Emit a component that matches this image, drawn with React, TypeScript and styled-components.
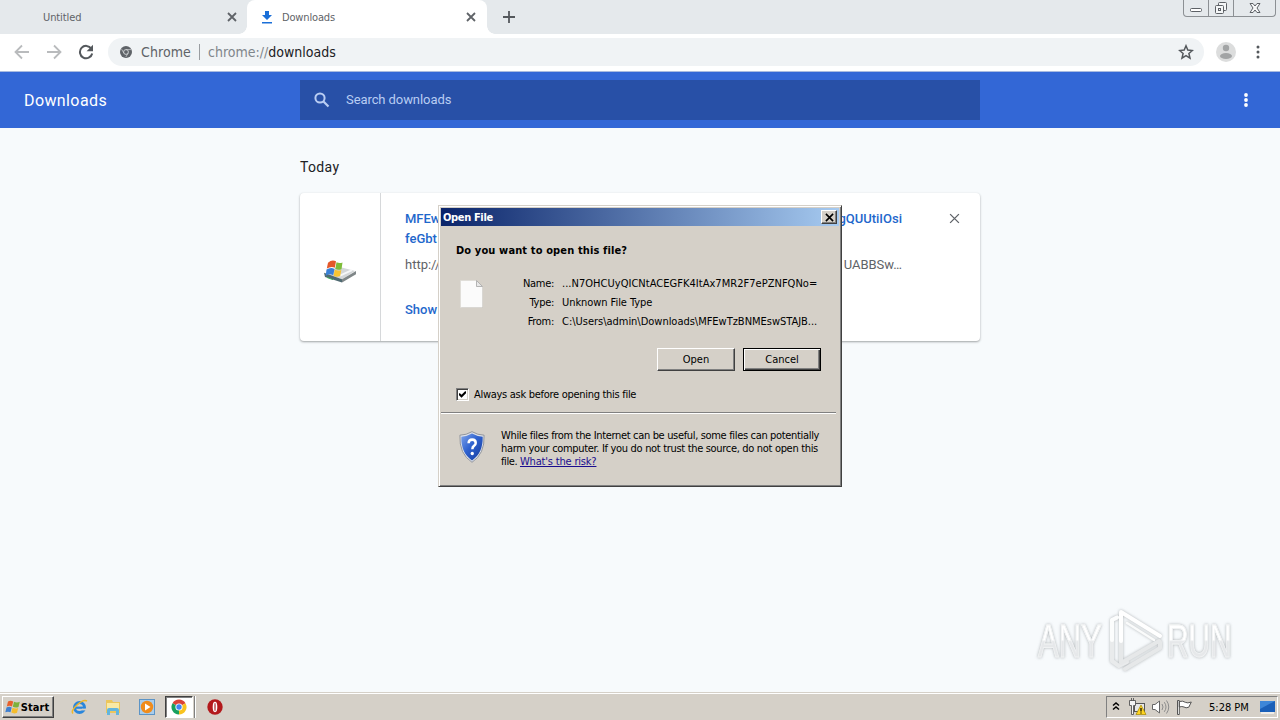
import React from 'react';
import styled, { createGlobalStyle, css } from 'styled-components';

const Global = createGlobalStyle`
  * { box-sizing: border-box; }
  body { margin: 0; overflow: hidden; background: #f7fafc; }
  svg { display: block; flex: none; }
`;

const tahoma = css`
  font-family: 'DejaVu Sans Condensed', 'DejaVu Sans', sans-serif;
  font-stretch: condensed;
`;

const Screen = styled.div`
  width: 1280px;
  height: 720px;
  display: flex;
  flex-direction: column;
  position: relative;
  overflow: hidden;
`;

const Label = styled.span<{ $ls?: number }>`
  white-space: pre;
  letter-spacing: ${p => p.$ls ?? 0}px;
`;

/* ---------- browser frame ---------- */
const TabStrip = styled.div`
  height: 34px;
  flex: none;
  background: #e5e9ec;
  display: flex;
  align-items: flex-start;
`;

const Tab = styled.div<{ $active?: boolean }>`
  ${tahoma}
  width: ${p => (p.$active ? 240 : 247)}px;
  height: 34px;
  display: flex;
  align-items: center;
  font-size: 11px;
  color: #5f6368;
  padding: 0 ${p => (p.$active ? 11 : 10)}px 0 ${p => (p.$active ? 14 : 43)}px;
  position: relative;
  background: ${p => (p.$active ? '#fff' : 'transparent')};
  border-radius: 8px 8px 0 0;
  ${p => p.$active && css`
    &::before, &::after {
      content: '';
      position: absolute;
      bottom: 0;
      width: 8px;
      height: 8px;
    }
    &::before { left: -8px; background: radial-gradient(circle at 0 0, transparent 7.5px, #fff 8px); }
    &::after { right: -8px; background: radial-gradient(circle at 100% 0, transparent 7.5px, #fff 8px); }
  `}
`;

const TabTitle = styled(Label)`
  flex: 1;
`;

const TabIcon = styled.div`
  width: 21px;
`;

const NewTab = styled.div`
  padding: 11px 0 0 16px;
  flex: 1;
`;

const WindowButtons = styled.div`
  display: flex;
  width: 93px;
  height: 17px;
  margin-right: 4px;
  border: 1px solid #8c9094;
  border-top: 0;
  border-radius: 0 0 4px 4px;
`;

const WindowButton = styled.div<{ $w: number }>`
  width: ${p => p.$w}px;
  display: flex;
  justify-content: center;
  & + & { border-left: 1px solid #8c9094; }
`;

const Toolbar = styled.div`
  height: 38px;
  flex: none;
  background: #fff;
  border-bottom: 1px solid #a9bbe0;
  display: flex;
  align-items: center;
  padding: 0 15px 2px 14px;
`;

const NavButton = styled.div`
  width: 32px;
`;

const Omnibox = styled.div`
  ${tahoma}
  width: 1096px;
  height: 28px;
  margin-left: -2px;
  border-radius: 14px;
  background: #f0f3f5;
  display: flex;
  align-items: center;
  padding: 0 10px 0 12px;
  font-size: 14px;
  color: #5f6368;
`;

const SiteName = styled(Label)`
  margin-left: 9px;
`;

const Divider = styled.div`
  width: 1px;
  height: 16px;
  background: #9a9da1;
  margin: 0 8px 0 8px;
`;

const Url = styled.div`
  flex: 1;
  color: #80868b;
  white-space: pre;
  b { color: #202124; font-weight: 400; }
`;

const Avatar = styled.div`
  margin: 0 20px 0 12px;
`;

/* ---------- downloads page ---------- */
const PageHeader = styled.div`
  height: 56px;
  flex: none;
  background: #3367d6;
  display: flex;
  align-items: center;
  justify-content: space-between;
  color: #fff;
  font-family: Roboto, sans-serif;
`;

const HeaderSide = styled.div<{ $end?: boolean }>`
  width: 300px;
  padding: 0 ${p => (p.$end ? 25 : 24)}px;
  display: flex;
  justify-content: ${p => (p.$end ? 'flex-end' : 'flex-start')};
  font-size: 16px;
`;

const Search = styled.div`
  width: 680px;
  height: 40px;
  background: #2850a7;
  display: flex;
  align-items: center;
  padding-left: 14px;
  gap: 16px;
  font-size: 13px;
  color: #b9cdf3;
`;

const SearchHint = styled(Label)`
  padding-bottom: 2px;
`;

const Content = styled.div`
  flex: 1;
  width: 680px;
  margin: 0 auto;
  padding-top: 29px;
  font-family: Roboto, sans-serif;
`;

const DateHeading = styled.div`
  font-size: 14px;
  line-height: 20px;
  color: #202124;
  margin-bottom: 16px;
`;

const Card = styled.div`
  height: 148px;
  background: #fff;
  border-radius: 4px;
  box-shadow: 0 1px 2px rgba(60, 64, 67, 0.35), 0 1px 3px rgba(60, 64, 67, 0.15);
  display: flex;
  font-size: 13px;
`;

const IconColumn = styled.div`
  width: 81px;
  border-right: 1px solid #d6d8da;
  display: flex;
  align-items: center;
  justify-content: center;
  padding-top: 7px;
`;

const Details = styled.div`
  width: 560px;
  padding: 16px 0 0 24px;
  line-height: 20px;
  display: flex;
  flex-direction: column;
`;

const DetailRow = styled.div<{ $kind: 'name' | 'url' | 'action' }>`
  width: 497px;
  height: 20px;
  display: flex;
  justify-content: space-between;
  color: ${p => (p.$kind === 'url' ? '#5f6368' : '#1f68cc')};
  font-weight: ${p => (p.$kind === 'url' ? 400 : 500)};
  margin-top: ${p => (p.$kind === 'url' ? 6 : p.$kind === 'action' ? 25 : 0)}px;
`;

const RemoveButton = styled.div`
  padding: 20px 0 0 8px;
`;

/* ---------- dialog ---------- */
const Dialog = styled.div`
  ${tahoma}
  position: absolute;
  left: 438px;
  top: 205px;
  width: 404px;
  height: 282px;
  background: #d5d0c8;
  border: 1px solid #d5d0c8;
  border-right-color: #404040;
  border-bottom-color: #404040;
  box-shadow: inset 1px 1px 0 #fff, inset -1px -1px 0 #808080;
  padding: 2px;
  font-size: 11px;
  color: #000;
`;

const TitleBar = styled.div`
  height: 18px;
  background: linear-gradient(90deg, #0a246a, #a6caf0);
  display: flex;
  align-items: center;
  justify-content: space-between;
  padding: 0 2px;
  color: #fff;
  font-weight: 700;
`;

const Raised = css`
  background: #d5d0c8;
  border: 1px solid;
  border-color: #fff #404040 #404040 #fff;
  box-shadow: inset -1px -1px 0 #808080;
  display: flex;
  align-items: center;
  justify-content: center;
`;

const CloseBox = styled.div`
  ${Raised}
  width: 16px;
  height: 14px;
`;

const Question = styled.div`
  padding: 17px 0 0 15px;
  line-height: 16px;
  font-weight: 700;
`;

const FileInfo = styled.div`
  display: flex;
  padding: 16px 0 0 19px;
`;

const FileIcon = styled.div`
  width: 49px;
  padding-top: 5px;
`;

const Fields = styled.div`
  display: grid;
  grid-template-columns: 45px 258px;
  column-gap: 8px;
  grid-auto-rows: 19px;
  line-height: 18px;
`;

const FieldName = styled.div`
  text-align: right;
  white-space: pre;
  letter-spacing: -0.3px;
`;

const Buttons = styled.div`
  display: flex;
  justify-content: flex-end;
  gap: 8px;
  padding: 16px 18px 0 0;
`;

const Button = styled.div<{ $default?: boolean }>`
  ${Raised}
  width: 78px;
  height: 23px;
  ${p => p.$default && css`
    border-color: #000;
    box-shadow: inset 1px 1px 0 #fff, inset -1px -1px 0 #404040, inset -2px -2px 0 #808080;
  `}
`;

const CheckRow = styled.div`
  display: flex;
  align-items: center;
  gap: 5px;
  padding: 16px 0 0 15px;
  line-height: 16px;
`;

const CheckBox = styled.div`
  width: 13px;
  height: 13px;
  margin-bottom: 2px;
  background: #fff;
  border: 1px solid;
  border-color: #808080 #fff #fff #808080;
  box-shadow: inset 1px 1px 0 #404040, inset -1px -1px 0 #d5d0c8;
  padding: 2px;
`;

const Groove = styled.div`
  height: 2px;
  margin: 9px 3px 0 0;
  border-top: 1px solid #808080;
  border-bottom: 1px solid #fff;
`;

const Warning = styled.div`
  display: flex;
  padding: 15px 0 0 18px;
`;

const ShieldSlot = styled.div`
  padding-top: 2px;
`;

const WarningText = styled.div`
  margin-left: 16px;
  line-height: 13px;
  display: flex;
  flex-direction: column;
`;

const Link = styled(Label)`
  color: #1a0d8f;
  text-decoration: underline;
`;

/* ---------- watermark ---------- */
const Watermark = styled.div`
  position: absolute;
  left: 1038px;
  top: 608px;
  width: 196px;
  height: 66px;
  display: flex;
  align-items: center;
  justify-content: space-between;
  filter: drop-shadow(0 0 1.5px rgba(120, 125, 130, 0.55));
`;

const MarkSlot = styled.div<{ $w: number }>`
  width: ${p => p.$w}px;
`;

const MarkText = styled.span<{ $sx: number }>`
  display: block;
  width: max-content;
  transform-origin: 0 50%;
  transform: scaleX(${p => p.$sx});
  font: 400 47px/66px 'Liberation Sans Narrow', 'Liberation Sans', sans-serif;
  color: transparent;
  background: linear-gradient(#fff 48%, #e6e8ea 51%);
  background-clip: text;
  -webkit-background-clip: text;
  -webkit-text-stroke: 1px #f0f2f3;
`;

/* ---------- taskbar ---------- */
const Taskbar = styled.div`
  ${tahoma}
  height: 28px;
  flex: none;
  background: #d5d0c8;
  border-top: 1px solid #d5d0c8;
  box-shadow: inset 0 1px 0 #fff;
  display: flex;
  align-items: center;
  padding: 3px 2px 2px;
  font-size: 11px;
`;

const StartButton = styled.div`
  ${Raised}
  width: 52px;
  height: 22px;
  padding-right: 2px;
  font-weight: 700;
`;

const QuickLaunch = styled.div`
  flex: 1;
  display: flex;
  align-items: center;
  padding-left: 17px;
`;

const QuickItem = styled.div<{ $w: number }>`
  width: ${p => p.$w}px;
`;

const ActiveTask = styled.div`
  width: 28px;
  height: 22px;
  background: #fff;
  border: 1px solid;
  border-color: #404040 #fff #fff #404040;
  box-shadow: inset 1px 1px 0 #808080;
  display: flex;
  align-items: center;
  justify-content: center;
  margin-right: 1px;
`;

const TaskEdge = styled.div`
  width: 2px;
  height: 22px;
  border-left: 1px solid #808080;
  background: #fff;
  margin-right: 11px;
`;

const Tray = styled.div`
  width: 172px;
  height: 22px;
  border: 1px solid;
  border-color: #808080 #fff #fff #808080;
  display: flex;
  align-items: center;
  padding-left: 5px;
`;

const Clock = styled(Label)`
  width: 40px;
  margin: 0 11px 0 11px;
`;

/* ---------- icons ---------- */
const Cross = ({ s = 10, w = 1.8, c = '#5f6368' }: { s?: number; w?: number; c?: string }) => (
  <svg width={s} height={s} viewBox="0 0 10 10">
    <path d="M1 1l8 8M9 1l-8 8" stroke={c} strokeWidth={w} fill="none" />
  </svg>
);

const Arrow = ({ right }: { right?: boolean }) => (
  <svg width="16" height="16" viewBox="0 0 16 16">
    <path
      d={right ? 'M1 8h13M8 1.5L14.5 8 8 14.5' : 'M15 8H2M8 1.5L1.5 8 8 14.5'}
      stroke="#b9bbbd" strokeWidth="1.8" fill="none"
    />
  </svg>
);

const Dots = ({ c }: { c: string }) => (
  <svg width="4" height="14" viewBox="0 0 4 14">
    <circle cx="2" cy="2" r="1.5" fill={c} />
    <circle cx="2" cy="7" r="1.5" fill={c} />
    <circle cx="2" cy="12" r="1.5" fill={c} />
  </svg>
);

const Flag = ({ s }: { s: number }) => (
  <svg width={s} height={s} viewBox="0 0 16 16">
    <path d="M3 2.500q2.500-1.500 5.200 0L7 7.500q-2.500-1.300-5.200 0z" fill="#e8602c" />
    <path d="M9 2.800q3 1.500 5.800 0L13.500 8q-3 1.200-5.700-.2z" fill="#7db13b" />
    <path d="M1.500 8.400q2.700-1.300 5.200 0L5.500 13.300q-2.500-1.300-5.200 0z" fill="#3f7fd0" />
    <path d="M7.500 8.800q2.800 1.400 5.700.2L12 13.800q-3 1.300-5.700-.2z" fill="#f5bd2d" />
  </svg>
);

const ChromeMono = () => (
  <svg width="12" height="12" viewBox="0 0 12 12">
    <circle cx="6" cy="6" r="6" fill="#5f6368" />
    <circle cx="6" cy="6" r="2.400" fill="none" stroke="#d5d8da" strokeWidth="0.900" />
    <path d="M6 3.600h5M3.900 7.200L1.600 3.200M8.100 7.200L5.800 11" stroke="#d5d8da" strokeWidth="0.700" />
  </svg>
);

const ChromeColor = () => (
  <svg width="16" height="16" viewBox="0 0 16 16">
    <path d="M8 8L1.500 4.250A7.500 7.500 0 0 1 14.500 4.250z" fill="#db4437" />
    <path d="M8 8L14.500 4.250A7.500 7.500 0 0 1 8 15.500z" fill="#f9c31f" />
    <path d="M8 8L8 15.500A7.500 7.500 0 0 1 1.500 4.250z" fill="#18a05e" />
    <circle cx="8" cy="8" r="3.600" fill="#fff" />
    <circle cx="8" cy="8" r="2.700" fill="#4285f4" />
  </svg>
);

const InstallerIcon = () => (
  <svg width="32" height="24" viewBox="0 0 32 26" preserveAspectRatio="none">
    <path d="M1 16L14 8l17 5-13 9z" fill="#d3d6d8" />
    <path d="M0 15l18 7v3.500L1 19.500z" fill="#4f6a72" />
    <path d="M18 22l14-9v3.500L18 25.500z" fill="#7f8688" />
    <path d="M16 18l12-6" stroke="#f6f7f8" strokeWidth="2" />
    <path d="M4 4q4-4 8-1.500l-1.200 7q-3.500-2-8 .8z" fill="#e4582a" />
    <path d="M12.500 3.500q3 1.500 6 .2L17.500 11q-3.500 1.500-6.200-.4z" fill="#7ebd3a" />
    <path d="M2.500 11.500q4-2.800 8-.8L9.200 17.500q-3.500-2-7.500.7z" fill="#3a80d6" />
    <path d="M10.800 11.500q3.200 1.800 6.500.4L16.200 18.500q-4 1.500-6.600-.3z" fill="#f7c531" />
    <path d="M3 20l6 2.400" stroke="#41b25a" strokeWidth="1" />
  </svg>
);

const DocumentIcon = () => (
  <svg width="24" height="29" viewBox="0 0 24 29">
    <path d="M1.500 1.500h15.500l6 6v20.500H1.500z" fill="#a8a49c" />
    <path d="M.5.5h16l6 6v21H.5z" fill="#fbfbfb" stroke="#dcdad6" strokeWidth=".7" />
    <path d="M16.500.5v6h6z" fill="#e8e8e8" stroke="#a5a5a5" strokeWidth=".8" />
  </svg>
);

const ShieldIcon = () => (
  <svg width="26" height="32" viewBox="0 0 28 32" preserveAspectRatio="none">
    <defs>
      <linearGradient id="shield" x1="0" y1="0" x2="1" y2="1">
        <stop offset="0" stopColor="#7fa4ea" />
        <stop offset=".45" stopColor="#2f62cf" />
        <stop offset="1" stopColor="#143a9c" />
      </linearGradient>
    </defs>
    <path d="M14 .7Q20 4 27 4.200 28 23 14 31.300 0 23 1 4.200 8 4 14 .7z" fill="#dde1e8" stroke="#868b94" strokeWidth=".9" />
    <path d="M14 2.600Q19.500 5.500 25.500 5.800 26 22 14 29.400 2 22 2.500 5.800 8.500 5.500 14 2.600z" fill="url(#shield)" />
    <path d="M10.300 12.300q.2-3.600 3.900-3.600 3.800 0 3.800 3.200 0 1.800-1.900 3-1.700 1.100-1.700 3.300" fill="none" stroke="#fff" strokeWidth="2.700" />
    <circle cx="14.300" cy="22.500" r="1.800" fill="#fff" />
  </svg>
);

const PlayMark = () => (
  <svg width="60" height="64" viewBox="0 0 60 64" fill="none" strokeLinejoin="round" strokeLinecap="round">
    <path d="M11 8.500L6 11v41l7 5 8-4" stroke="#e9ebec" strokeWidth="4" />
    <path d="M11 8.500L6 11v20" stroke="#fcfdfd" strokeWidth="4" />
    <path d="M15 4v50l38-22" stroke="#e6e8e9" strokeWidth="4" />
    <path d="M19 60l35-21V33" stroke="#e6e8e9" strokeWidth="4" />
    <path d="M15 32V3l39 24" stroke="#fff" strokeWidth="4" />
    <path d="M21 14l27 17" stroke="#fafbfb" strokeWidth="2.500" />
  </svg>
);

export default function App() {
  return (
    <>
      <Global />
      <Screen>
        <TabStrip>
          <Tab>
            <TabTitle $ls={-0.1}>Untitled</TabTitle>
            <Cross />
          </Tab>
          <Tab $active>
            <TabIcon>
              <svg width="12" height="13" viewBox="0 0 12 13">
                <path d="M4 0h4v4h3L6 9 1 4h3zM1 11h10v1.600H1z" fill="#1a6fd8" />
              </svg>
            </TabIcon>
            <TabTitle $ls={-0.15}>Downloads</TabTitle>
            <Cross />
          </Tab>
          <NewTab>
            <svg width="12" height="12" viewBox="0 0 12 12">
              <path d="M6 0v12M0 6h12" stroke="#54585c" strokeWidth="1.800" />
            </svg>
          </NewTab>
          <WindowButtons>
            <WindowButton $w={24}>
              <svg width="12" height="16" viewBox="0 0 12 16">
                <rect x=".5" y="8.500" width="11" height="3" rx="1" fill="#fff" stroke="#5d6166" />
              </svg>
            </WindowButton>
            <WindowButton $w={25}>
              <svg width="14" height="16" viewBox="0 0 14 16" fill="#f4f6f7" stroke="#5d6166">
                <rect x="4.500" y="2.500" width="8" height="8" rx="1" />
                <rect x="1.500" y="5.500" width="8" height="8" rx="1" />
                <rect x="4.500" y="8.500" width="2" height="2" />
              </svg>
            </WindowButton>
            <WindowButton $w={42}>
              <svg width="12" height="16" viewBox="0 0 12 16">
                <path d="M1 3.500h3l2 2.500 2-2.500h3L8 8l3 4.500H8L6 10l-2 2.500H1L4 8z" fill="#f7f8f9" stroke="#5d6166" />
              </svg>
            </WindowButton>
          </WindowButtons>
        </TabStrip>

        <Toolbar>
          <NavButton><Arrow /></NavButton>
          <NavButton><Arrow right /></NavButton>
          <NavButton>
            <svg width="16" height="16" viewBox="0 0 16 16">
              <path d="M13.300 4.600A6.200 6.200 0 1 0 14.200 9.500" stroke="#54585c" strokeWidth="2" fill="none" />
              <path d="M15 .8v6.400H8.600z" fill="#54585c" />
            </svg>
          </NavButton>
          <Omnibox>
            <ChromeMono />
            <SiteName $ls={0.1}>Chrome</SiteName>
            <Divider />
            <Url><Label>chrome://</Label><b>downloads</b></Url>
            <svg width="16" height="16" viewBox="0 0 16 16">
              <path d="M8 1.800l1.800 4.300 4.600.4-3.500 3 1.100 4.600L8 11.700l-4 2.400 1.100-4.600-3.500-3 4.600-.4z" fill="none" stroke="#54585c" strokeWidth="1.500" />
            </svg>
          </Omnibox>
          <Avatar>
            <svg width="20" height="20" viewBox="0 0 20 20">
              <circle cx="10" cy="10" r="10" fill="#dcdddd" />
              <circle cx="10" cy="6" r="3.200" fill="#a2a4a5" />
              <ellipse cx="10" cy="14" rx="6" ry="3" fill="#a2a4a5" />
            </svg>
          </Avatar>
          <Dots c="#54585c" />
        </Toolbar>

        <PageHeader>
          <HeaderSide><Label $ls={0.4}>Downloads</Label></HeaderSide>
          <Search>
            <svg width="16" height="16" viewBox="0 0 16 16">
              <circle cx="6" cy="6" r="4.600" fill="none" stroke="#b9cdf3" strokeWidth="2" />
              <path d="M9.500 9.500l5 5" stroke="#b9cdf3" strokeWidth="2.200" />
            </svg>
            <SearchHint $ls={-0.08}>Search downloads</SearchHint>
          </Search>
          <HeaderSide $end>
            <svg width="18" height="16" viewBox="0 0 18 16" fill="#fff">
              <circle cx="9" cy="3" r="1.900" /><circle cx="9" cy="8" r="1.900" /><circle cx="9" cy="13" r="1.900" />
            </svg>
          </HeaderSide>
        </PageHeader>

        <Content>
          <DateHeading><Label $ls={0.35}>Today</Label></DateHeading>
          <Card>
            <IconColumn><InstallerIcon /></IconColumn>
            <Details>
              <DetailRow $kind="name"><Label>MFEw</Label><Label>gQUUtiIOsi</Label></DetailRow>
              <DetailRow $kind="name"><Label>feGbt</Label></DetailRow>
              <DetailRow $kind="url"><Label>http://</Label><Label>UABBSw…</Label></DetailRow>
              <DetailRow $kind="action"><Label>Show</Label></DetailRow>
            </Details>
            <RemoveButton><Cross s={11} w={1.2} /></RemoveButton>
          </Card>
        </Content>

        <Taskbar>
          <StartButton><Flag s={16} /><Label $ls={0.1}>Start</Label></StartButton>
          <QuickLaunch>
            <QuickItem $w={34}>
              <svg width="17" height="16" viewBox="0 0 17 16" fill="none">
                <circle cx="8.500" cy="8.500" r="5" stroke="#2a86dc" strokeWidth="3" />
                <path d="M4 8.700h10" stroke="#2a86dc" strokeWidth="2.200" />
                <path d="M11 10.500h5" stroke="#d5d0c8" strokeWidth="1.800" />
                <path d="M2 14.500Q-.5 12 6 6T16 2" stroke="#efb72a" strokeWidth="1.500" />
              </svg>
            </QuickItem>
            <QuickItem $w={34}>
              <svg width="16" height="16" viewBox="0 0 16 16">
                <path d="M1 1h6l1 2h7v11H1z" fill="#ecc65c" />
                <path d="M2 4h12v7H2z" fill="#f9e9a5" />
                <path d="M2 16v-5q0-2 2-2h8q2 0 2 2v5h-3v-4H5v4z" fill="#63b5dd" />
              </svg>
            </QuickItem>
            <QuickItem $w={26}>
              <svg width="16" height="16" viewBox="0 0 16 16">
                <rect x=".5" y=".5" width="15" height="15" fill="#a9cdec" stroke="#5c94c6" />
                <circle cx="8" cy="8" r="6.200" fill="#f08c1c" />
                <path d="M6 4.500l5.500 3.500L6 11.500z" fill="#fff" />
              </svg>
            </QuickItem>
            <ActiveTask><ChromeColor /></ActiveTask>
            <TaskEdge />
            <svg width="16" height="16" viewBox="0 0 16 16">
              <circle cx="8" cy="8" r="7.700" fill="#b3191c" />
              <ellipse cx="8" cy="8" rx="2.300" ry="5.200" fill="#fff" />
              <ellipse cx="8" cy="8" rx="1" ry="4.200" fill="#c9787a" />
            </svg>
          </QuickLaunch>
          <Tray>
            <svg width="8" height="12" viewBox="0 0 8 12" fill="none" stroke="#000" strokeWidth="1.500">
              <path d="M1 4.500L4 2l3 2.500M1 8.500L4 6l3 2.500" />
            </svg>
            <svg width="30" height="18" viewBox="0 0 30 18">
              <rect x="14.500" y="5.500" width="10" height="8" fill="#e6e6e6" stroke="#555" />
              <path d="M9.500 2.500h6v5h-2v9h-2v-9h-2zM11.500 0v3M13.500 0v3" fill="#f4f4f4" stroke="#555" strokeWidth=".9" />
              <path d="M21 7l5 9.500H16z" fill="#ffd420" stroke="#a48600" strokeWidth=".7" />
              <path d="M21 10v3.500M21 14.500v1" stroke="#000" strokeWidth="1.200" />
            </svg>
            <svg width="22" height="16" viewBox="0 0 22 16" fill="none" stroke="#666">
              <path d="M2.500 5.500H5L9.500 2v12L5 10.500H2.500z" fill="#fff" />
              <path d="M12 5q2 3 0 6M14.300 3.200q3.400 4.800 0 9.600M16.500 1.500q4.500 6.500 0 13" stroke="#8c8c8c" />
            </svg>
            <svg width="26" height="16" viewBox="0 0 26 16" fill="#fff" stroke="#555">
              <path d="M5.500 1.500h1.800v14H5.500zM7.300 2.500q3.700-1 6 .8 2.200 1.300 6-.3l-2.500 5.200q-3 1.300-4.800-.2-2-1-4.700 0z" />
            </svg>
            <Clock>5:28 PM</Clock>
            <svg width="16" height="14" viewBox="0 0 16 14">
              <rect width="15" height="11" y="1" fill="#1a5fb8" />
              <path d="M0 1h15L0 9z" fill="#3d86d8" />
              <path d="M1 13h13" stroke="#fff" strokeWidth="1.200" />
            </svg>
          </Tray>
        </Taskbar>

        <Watermark>
          <MarkSlot $w={66}><MarkText $sx={0.66}>ANY</MarkText></MarkSlot>
          <PlayMark />
          <MarkSlot $w={67}><MarkText $sx={0.635}>RUN</MarkText></MarkSlot>
        </Watermark>

        <Dialog>
          <TitleBar>
            <Label $ls={-0.35}>Open File</Label>
            <CloseBox><Cross s={9} w={1.8} c="#000" /></CloseBox>
          </TitleBar>
          <Question><Label $ls={0.13}>Do you want to open this file?</Label></Question>
          <FileInfo>
            <FileIcon><DocumentIcon /></FileIcon>
            <Fields>
              <FieldName>Name:</FieldName><Label $ls={0.03}>...N7OHCUyQICNtACEGFK4ItAx7MR2F7ePZNFQNo=</Label>
              <FieldName>Type:</FieldName><Label $ls={-0.06}>Unknown File Type</Label>
              <FieldName>From:</FieldName><Label $ls={-0.02}>C:\Users\admin\Downloads\MFEwTzBNMEswSTAJB...</Label>
            </Fields>
          </FileInfo>
          <Buttons>
            <Button>Open</Button>
            <Button $default>Cancel</Button>
          </Buttons>
          <CheckRow>
            <CheckBox>
              <svg width="7" height="7" viewBox="0 0 7 7">
                <path d="M0 2.800l2.500 2.500L7 .8" stroke="#000" strokeWidth="2" fill="none" />
              </svg>
            </CheckBox>
            <Label $ls={-0.29}>Always ask before opening this file</Label>
          </CheckRow>
          <Groove />
          <Warning>
            <ShieldSlot><ShieldIcon /></ShieldSlot>
            <WarningText>
              <Label $ls={-0.335}>While files from the Internet can be useful, some files can potentially</Label>
              <Label $ls={-0.32}>harm your computer. If you do not trust the source, do not open this</Label>
              <span><Label $ls={-0.4}>file. </Label><Link $ls={-0.18}>What's the risk?</Link></span>
            </WarningText>
          </Warning>
        </Dialog>
      </Screen>
    </>
  );
}
